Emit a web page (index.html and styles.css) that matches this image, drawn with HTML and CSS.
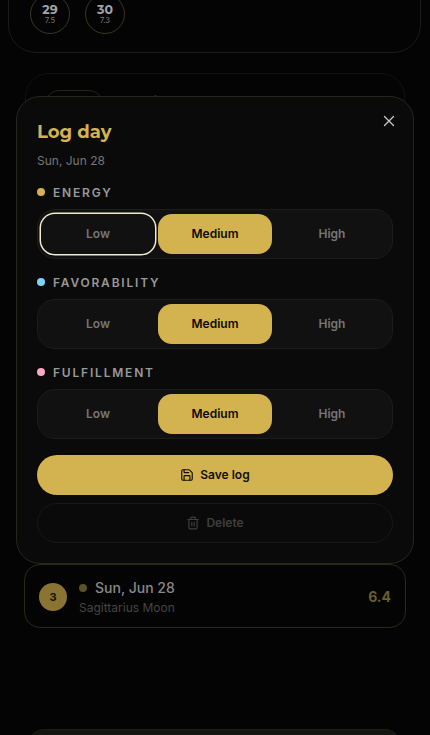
FILE: index.html
```html
<!DOCTYPE html>
<html lang="en">
<head>
<meta charset="utf-8">
<title>Log day</title>
<link rel="stylesheet" href="styles.css">
</head>
<body>
<div class="page">
  <section class="month-card">
    <div class="day-circle"><b>29</b><span>7.5</span></div>
    <div class="day-circle"><b>30</b><span>7.3</span></div>
  </section>
  <section class="list-card">
    <div class="list-pill"></div>
    <i class="list-mark"></i>
  </section>
  <div class="row-card">
    <div class="rank">3</div>
    <div class="row-text">
      <div class="row-title"><i class="row-dot"></i>Sun, Jun 28</div>
      <div class="row-sub">Sagittarius Moon</div>
    </div>
    <div class="row-score">6.4</div>
  </div>
  <div class="bottom-card"></div>

  <div class="modal">
    <button class="close" aria-label="Close">
      <svg width="14" height="14" viewBox="0 0 14 14" fill="none" stroke="currentColor" stroke-width="1.3" stroke-linecap="round"><path d="M2.5 2.5l9 9M11.5 2.5l-9 9"/></svg>
    </button>
    <h2 class="title">Log day</h2>
    <p class="date">Sun, Jun 28</p>

    <div class="label"><i class="dot dot-energy"></i>ENERGY</div>
    <div class="segment">
      <button class="opt focus">Low</button>
      <button class="opt on">Medium</button>
      <button class="opt">High</button>
    </div>

    <div class="label"><i class="dot dot-fav"></i>FAVORABILITY</div>
    <div class="segment">
      <button class="opt">Low</button>
      <button class="opt on">Medium</button>
      <button class="opt">High</button>
    </div>

    <div class="label"><i class="dot dot-ful"></i>FULFILLMENT</div>
    <div class="segment">
      <button class="opt">Low</button>
      <button class="opt on">Medium</button>
      <button class="opt">High</button>
    </div>

    <button class="save">
      <svg width="14" height="14" viewBox="0 0 24 24" fill="none" stroke="currentColor" stroke-width="2" stroke-linecap="round" stroke-linejoin="round"><path d="M15.2 3a2 2 0 0 1 1.4.6l3.8 3.8a2 2 0 0 1 .6 1.4V19a2 2 0 0 1-2 2H5a2 2 0 0 1-2-2V5a2 2 0 0 1 2-2z"/><path d="M17 21v-7a1 1 0 0 0-1-1H8a1 1 0 0 0-1 1v7"/><path d="M7 3v4a1 1 0 0 0 1 1h7"/></svg>
      Save log
    </button>
    <button class="delete">
      <svg width="14" height="14" viewBox="0 0 24 24" fill="none" stroke="currentColor" stroke-width="2" stroke-linecap="round" stroke-linejoin="round"><path d="M3 6h18"/><path d="M19 6v14a2 2 0 0 1-2 2H7a2 2 0 0 1-2-2V6"/><path d="M8 6V4a2 2 0 0 1 2-2h4a2 2 0 0 1 2 2v2"/><path d="M10 11v6M14 11v6"/></svg>
      Delete
    </button>
  </div>
</div>
</body>
</html>
```
FILE: styles.css
```css
* { box-sizing: border-box; }
html, body { margin: 0; height: 100%; background: #040404; }
button { font-family: inherit; border: 0; background: none; padding: 0; }
.page {
  position: relative;
  width: 430px;
  height: 735px;
  overflow: hidden;
  background: #040404;
  font-family: Inter, "Liberation Sans", sans-serif;
}
.month-card {
  display: flex;
  gap: 15px;
  width: 413px;
  height: 101px;
  margin: -48px 0 0 8px;
  padding: 41px 0 0 21px;
  border: 1px solid #1c1b16;
  border-radius: 28px;
}
.day-circle {
  width: 40px;
  height: 40px;
  border: 1px solid #3a3624;
  border-radius: 50%;
  display: flex;
  flex-direction: column;
  align-items: center;
  justify-content: center;
  color: #8f8f8f;
}
.day-circle b { font: 700 12.5px/13px Montserrat, Inter, sans-serif; color: #a3a3a3; }
.day-circle span { font-size: 7.5px; line-height: 10px; color: #7b7b7b; }
.list-card {
  position: relative;
  width: 380px;
  height: 200px;
  margin: 20px 0 0 25px;
  padding: 16px 0 0 19px;
  border: 1px solid #111110;
  border-radius: 24px;
}
.list-pill { width: 58px; height: 30px; border: 1px solid #24221a; border-radius: 14px; }
.list-mark { position: absolute; left: 128px; top: 21px; width: 3px; height: 4px; border-radius: 50%; background: #2a2a2a; }
.row-card {
  display: flex;
  align-items: center;
  gap: 12px;
  width: 382px;
  height: 64px;
  margin: 292px 0 0 24px;
  padding: 0 14px;
  border: 1px solid #2a2917;
  border-radius: 16px;
  position: relative;
  top: -1px;
}
.rank {
  width: 28px;
  height: 28px;
  margin-top: 1px;
  border-radius: 50%;
  background: #8a7434;
  color: #141208;
  font-size: 11px;
  font-weight: 700;
  display: flex;
  align-items: center;
  justify-content: center;
}
.row-text { flex: 1; padding-top: 3px; }
.row-title { font-size: 14px; font-weight: 500; line-height: 20px; color: #888; display: flex; align-items: center; }
.row-dot { width: 8px; height: 8px; border-radius: 50%; background: #5b5129; margin-right: 8px; }
.row-sub { margin-top: 1px; font-size: 12px; line-height: 18px; color: #444; }
.row-score { padding-top: 1px; font-size: 14px; font-weight: 700; color: #6a5e2c; }
.bottom-card {
  position: absolute;
  left: 28px;
  top: 729px;
  width: 373px;
  height: 40px;
  border-radius: 16px 16px 0 0;
  background: #141410;
  border-top: 1px solid #1e1e1a;
}
.modal {
  position: absolute;
  left: 16px;
  top: 96px;
  width: 398px;
  height: 468px;
  padding: 24px 20px 0;
  background: #0a0a0a;
  border: 1px solid #26261f;
  border-radius: 24px;
}
.close {
  position: absolute;
  top: 17px;
  right: 17px;
  color: #c9c9c9;
  display: flex;
}
.title {
  margin: 0;
  font: 700 18px/22px Montserrat, "Open Sans", Inter, sans-serif;
  color: #d3b350;
}
.date { margin: 9px 0 0; font-size: 12px; line-height: 18px; color: #777; }
.label {
  display: flex;
  align-items: center;
  height: 16px;
  margin-top: 14px;
  font-size: 12px;
  font-weight: 600;
  letter-spacing: 1.8px;
  color: #999;
}
.segment + .label { margin-top: 15px; }
.dot { width: 8px; height: 8px; border-radius: 50%; margin-right: 8px; }
.dot-energy { background: #d3b350; }
.dot-fav { background: #7dd3fc; }
.dot-ful { background: #f9a8c4; }
.segment {
  display: grid;
  grid-template-columns: repeat(3, 1fr);
  gap: 3px;
  height: 50px;
  margin-top: 9px;
  padding: 4px 3px;
  background: #111111;
  border: 1px solid #1c1c1c;
  border-radius: 18px;
}
.opt {
  padding-bottom: 2px;
  border-radius: 14px;
  font-size: 12px;
  font-weight: 600;
  color: #767676;
}
.opt.on { background: #d3b350; color: #0d0a02; }
.opt.focus { box-shadow: 0 0 0 1.5px #f0ead0, 0 0 0 2.5px #111; }
.save, .delete {
  display: flex;
  align-items: center;
  justify-content: center;
  gap: 6px;
  width: 356px;
  height: 40px;
  padding-bottom: 1px;
  border-radius: 20px;
  font-size: 12px;
  font-weight: 600;
}
.save { margin-top: 16px; background: #d3b350; color: #130e02; }
.delete { margin-top: 8px; border: 1px solid #171717; color: #3f3f3f; }
```
